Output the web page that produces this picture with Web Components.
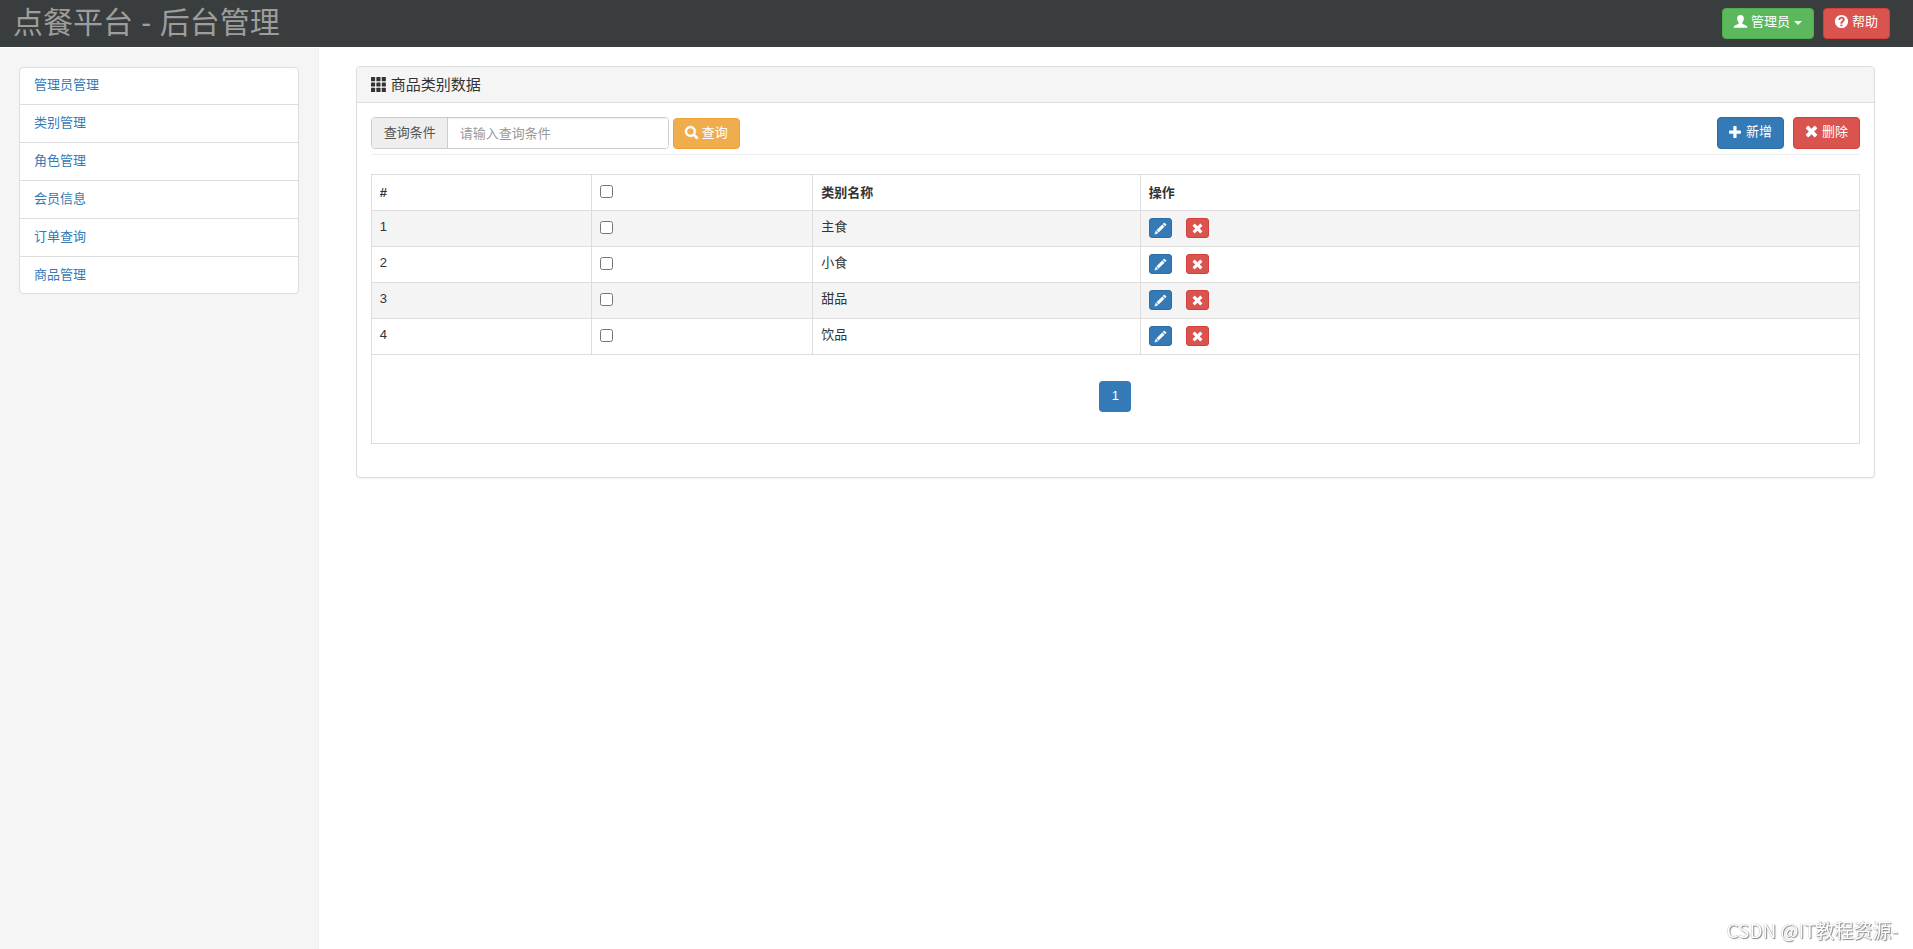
<!DOCTYPE html>
<html lang="zh-CN">
<head>
<meta charset="utf-8">
<title>点餐平台 - 后台管理</title>
<style>
html { height: 100%; }
body { margin: 0; height: 100%; background: #fff; color: #333; font: 13px/19px "Liberation Sans", "Noto Sans CJK SC", sans-serif; }
</style>
</head>
<body>
<admin-app></admin-app>
<script>
const flip = (d, extra = '') => `<path transform="matrix(1 0 0 -1 0 1200)" ${extra} d="${d}"/>`;
const ICONS = {
  th: [0, 1, 2].map(r => [0, 1, 2].map(c => `<rect x="${c * 430}" y="${r * 430}" width="330" height="330" rx="40"/>`).join('')).join(''),
  plus: flip('M450 1100h200q21 0 35.5 -14.5t14.5 -35.5v-350h350q21 0 35.5 -14.5t14.5 -35.5v-200q0 -21 -14.5 -35.5t-35.5 -14.5h-350v-350q0 -21 -14.5 -35.5t-35.5 -14.5h-200q-21 0 -35.5 14.5t-14.5 35.5v350h-350q-21 0 -35.5 14.5t-14.5 35.5v200q0 21 14.5 35.5t35.5 14.5h350v350q0 21 14.5 35.5t35.5 14.5z'),
  remove: '<path d="M270 80Q295 55 320 80L600 355L880 80Q905 55 930 80L1120 270Q1145 295 1120 320L845 600L1120 880Q1145 905 1120 930L930 1120Q905 1145 880 1120L600 845L320 1120Q295 1145 270 1120L80 930Q55 905 80 880L355 600L80 320Q55 295 80 270Z"/>',
  pencil: flip('M1011 1210q19 0 33 -13l153 -153q13 -14 13 -33t-13 -33l-99 -92l-214 214l95 96q13 14 32 14zM1013 800l-615 -614l-214 214l614 614zM317 96l-333 -112l110 335z', 'stroke="currentColor" stroke-width="50"'),
  search: flip('M500 1191q100 0 191 -39t156.5 -104.5t104.5 -156.5t39 -191l-1 -2l1 -5q0 -141 -78 -262l275 -274q23 -26 22.5 -44.5t-22.5 -42.5l-59 -58q-26 -20 -46.5 -20t-39.5 20l-275 274q-119 -77 -261 -77l-5 1l-2 -1q-100 0 -191 39t-156.5 104.5t-104.5 156.5t-39 191t39 191t104.5 156.5t156.5 104.5t191 39zM500 1022q-88 0 -162 -43t-117 -117t-43 -162t43 -162t117 -117t162 -43t162 43t117 117t43 162t-43 162t-117 117t-162 43z', 'stroke="currentColor" stroke-width="50"'),
  user: '<path d="M600 10C790 10 910 130 910 320C910 470 850 610 760 700L760 790C810 850 1010 910 1110 970C1200 1020 1230 1080 1230 1180H-30C-30 1080 0 1020 90 970C190 910 390 850 440 790L440 700C350 610 290 470 290 320C290 130 410 10 600 10Z"/>',
  question: '<path fill-rule="evenodd" d="M600 -10A610 610 0 1 1 600 1210A610 610 0 1 1 600 -10ZM500 880V1040H680V880ZM320 470H490C490 370 540 330 610 330C680 330 715 360 715 415C715 470 690 500 620 555C530 625 500 670 500 800H675C675 720 700 690 770 640C840 590 895 520 895 415C895 255 780 170 610 170C430 170 320 280 320 470Z"/>'
};

class GlyphIcon extends HTMLElement {
  connectedCallback() {
    this.attachShadow({ mode: 'open' }).innerHTML = `
      <style>:host{display:inline-block;width:1em;height:1em;line-height:1;flex:none}svg{display:block;width:100%;height:100%;overflow:visible;fill:currentColor}</style>
      <svg viewBox="0 0 1200 1200" aria-hidden="true">${ICONS[this.getAttribute('name')]}</svg>`;
  }
}
customElements.define('glyph-icon', GlyphIcon);

class ActionButton extends HTMLElement {
  connectedCallback() {
    const icon = this.getAttribute('icon');
    const label = this.getAttribute('label');
    this.attachShadow({ mode: 'open' }).innerHTML = `
      <style>
        :host { display: inline-block; --bg: #337ab7; --line: #2e6da4; }
        :host([tone=success]) { --bg: #5cb85c; --line: #4cae4c; }
        :host([tone=danger]) { --bg: #d9534f; --line: #d43f3a; }
        :host([tone=warning]) { --bg: #f0ad4e; --line: #eea236; }
        button { display: flex; align-items: center; gap: 4px; box-sizing: border-box; height: 31px; margin: 0; padding: 0 11px 3px;
          border: 1px solid var(--line); border-radius: 4px; background: var(--bg); color: #fff; font: inherit; white-space: nowrap; cursor: pointer; }
        :host([tall]) button { height: 32px; }
        :host([compact]) button { height: 20px; padding: 0 5px; border-radius: 3px; font-size: 11px; }
        .caret { margin-top: 3px; border: 4px solid transparent; border-top-color: #fff; border-bottom: 0; }
      </style>
      <button type="button" ${label ? `aria-label="${label}"` : ''}><glyph-icon name="${icon}"></glyph-icon><slot></slot>${this.hasAttribute('caret') ? '<span class="caret"></span>' : ''}</button>`;
  }
}
customElements.define('action-button', ActionButton);

class TopBar extends HTMLElement {
  connectedCallback() {
    this.attachShadow({ mode: 'open' }).innerHTML = `
      <style>
        :host { display: flex; align-items: center; justify-content: space-between; box-sizing: border-box; height: 48px; padding: 0 23px 1px 13px; background: #393d3d; border-bottom: 1px solid #fff; }
        a { color: #9d9d9d; font-size: 30px; line-height: 46px; text-decoration: none; white-space: nowrap; }
        nav { display: flex; gap: 9px; }
      </style>
      <a href="#">点餐平台 - 后台管理</a>
      <nav><action-button tone="success" icon="user" caret>管理员</action-button><action-button tone="danger" icon="question">帮助</action-button></nav>`;
  }
}
customElements.define('top-bar', TopBar);

class SideMenu extends HTMLElement {
  connectedCallback() {
    const items = ['管理员管理', '类别管理', '角色管理', '会员信息', '订单查询', '商品管理'];
    this.attachShadow({ mode: 'open' }).innerHTML = `
      <style>
        :host { display: block; box-sizing: border-box; padding: 19px; background: #f5f5f5; border-right: 1px solid #eee; }
        ul { list-style: none; margin: 0; padding: 0; border: 1px solid #ddd; border-radius: 4px; background: #fff; }
        li + li { border-top: 1px solid #ddd; }
        a { display: block; padding: 8px 14px 10px; color: #337ab7; text-decoration: none; }
        li:first-child a { padding-top: 7px; }
        li:last-child a { padding-bottom: 9px; }
      </style>
      <ul>${items.map(t => `<li><a href="#">${t}</a></li>`).join('')}</ul>`;
  }
}
customElements.define('side-menu', SideMenu);

class SearchForm extends HTMLElement {
  connectedCallback() {
    this.attachShadow({ mode: 'open' }).innerHTML = `
      <style>
        :host { display: flex; justify-content: space-between; padding-bottom: 5px; border-bottom: 1px solid #eee; }
        form, .tools { display: flex; align-items: flex-end; }
        form { gap: 4px; }
        .tools { gap: 9px; }
        .group { display: flex; box-sizing: border-box; height: 32px; border: 1px solid #ccc; border-radius: 4px; overflow: hidden; }
        label { padding: 5px 11px 0 12px; background: #eee; color: #555; border-right: 1px solid #ccc; }
        input { box-sizing: border-box; width: 220px; border: 0; padding: 0 12px; background: #fff; color: #555; font: inherit; outline: 0; box-shadow: inset 0 1px 1px #eee; }
        input::placeholder { color: #999; opacity: 1; }
      </style>
      <form>
        <div class="group"><label for="q">查询条件</label><input id="q" type="text" placeholder="请输入查询条件"></div>
        <action-button tone="warning" icon="search">查询</action-button>
      </form>
      <div class="tools"><action-button tall icon="plus">新增</action-button><action-button tall tone="danger" icon="remove">删除</action-button></div>`;
  }
}
customElements.define('search-form', SearchForm);

class CategoryTable extends HTMLElement {
  connectedCallback() {
    const rows = ['主食', '小食', '甜品', '饮品'];
    this.attachShadow({ mode: 'open' }).innerHTML = `
      <style>
        :host { display: block; margin-top: 19px; }
        table { width: 100%; table-layout: fixed; border-collapse: collapse; border: 1px solid #ddd; }
        th, td { box-sizing: border-box; height: 36px; padding: 6px 8px; border: 1px solid #ddd; text-align: left; vertical-align: top; }
        th { padding-top: 8px; }
        tbody tr:nth-child(odd) { background: #f4f4f4; }
        .n { width: 14.8%; } .c { width: 14.87%; } .name { width: 22%; }
        input { display: block; width: 13px; height: 13px; margin: 2px 0 0; }
        tbody input { margin-top: 4px; }
        .ops { display: flex; gap: 14px; padding-top: 1px; }
        tfoot td { height: 89px; padding: 26px 8px; text-align: center; }
        .page { display: inline-block; box-sizing: border-box; width: 32px; height: 31px; border-radius: 4px; background: #337ab7; color: #fff; line-height: 30px; text-decoration: none; }
      </style>
      <table>
        <colgroup><col class="n"><col class="c"><col class="name"><col></colgroup>
        <thead><tr><th>#</th><th><input type="checkbox" aria-label="全选"></th><th>类别名称</th><th>操作</th></tr></thead>
        <tbody>${rows.map((r, i) => `<tr><td>${i + 1}</td><td><input type="checkbox" aria-label="选择${r}"></td><td>${r}</td>
          <td><div class="ops"><action-button compact icon="pencil" label="编辑"></action-button><action-button compact tone="danger" icon="remove" label="删除"></action-button></div></td></tr>`).join('')}</tbody>
        <tfoot><tr><td colspan="4"><a class="page" href="#">1</a></td></tr></tfoot>
      </table>`;
  }
}
customElements.define('category-table', CategoryTable);

class DataPanel extends HTMLElement {
  connectedCallback() {
    this.attachShadow({ mode: 'open' }).innerHTML = `
      <style>
        :host { display: block; border: 1px solid #ddd; border-radius: 4px; background: #fff; box-shadow: 0 1px 1px rgba(0,0,0,.05); }
        h3 { display: flex; align-items: center; gap: 5px; box-sizing: border-box; height: 36px; margin: 0; padding: 0 14px; background: #f5f5f5; border-bottom: 1px solid #ddd; border-radius: 3px 3px 0 0; font-size: 15px; font-weight: 400; }
        .body { padding: 14px 14px 33px; }
      </style>
      <h3><glyph-icon name="th"></glyph-icon><slot name="title"></slot></h3>
      <div class="body"><slot></slot></div>`;
  }
}
customElements.define('data-panel', DataPanel);

class AdminApp extends HTMLElement {
  connectedCallback() {
    this.attachShadow({ mode: 'open' }).innerHTML = `
      <style>
        :host { display: flex; flex-direction: column; min-height: 100%; }
        .layout { flex: 1; display: grid; grid-template-columns: minmax(0, 1fr) minmax(0, 5fr); }
        main { padding: 18px 38px 20px 37px; }
        .mark { position: fixed; right: 15px; bottom: 7px; color: #fff; font-family: "Noto Sans CJK SC", sans-serif; font-size: 19px; line-height: 24px; text-shadow: 1px 1px 1px #888, 0 0 1px #888; }
      </style>
      <top-bar></top-bar>
      <div class="layout">
        <side-menu></side-menu>
        <main><data-panel><span slot="title">商品类别数据</span><search-form></search-form><category-table></category-table></data-panel></main>
      </div>
      <div class="mark">CSDN @IT教程资源-</div>`;
  }
}
customElements.define('admin-app', AdminApp);
</script>
</body>
</html>
